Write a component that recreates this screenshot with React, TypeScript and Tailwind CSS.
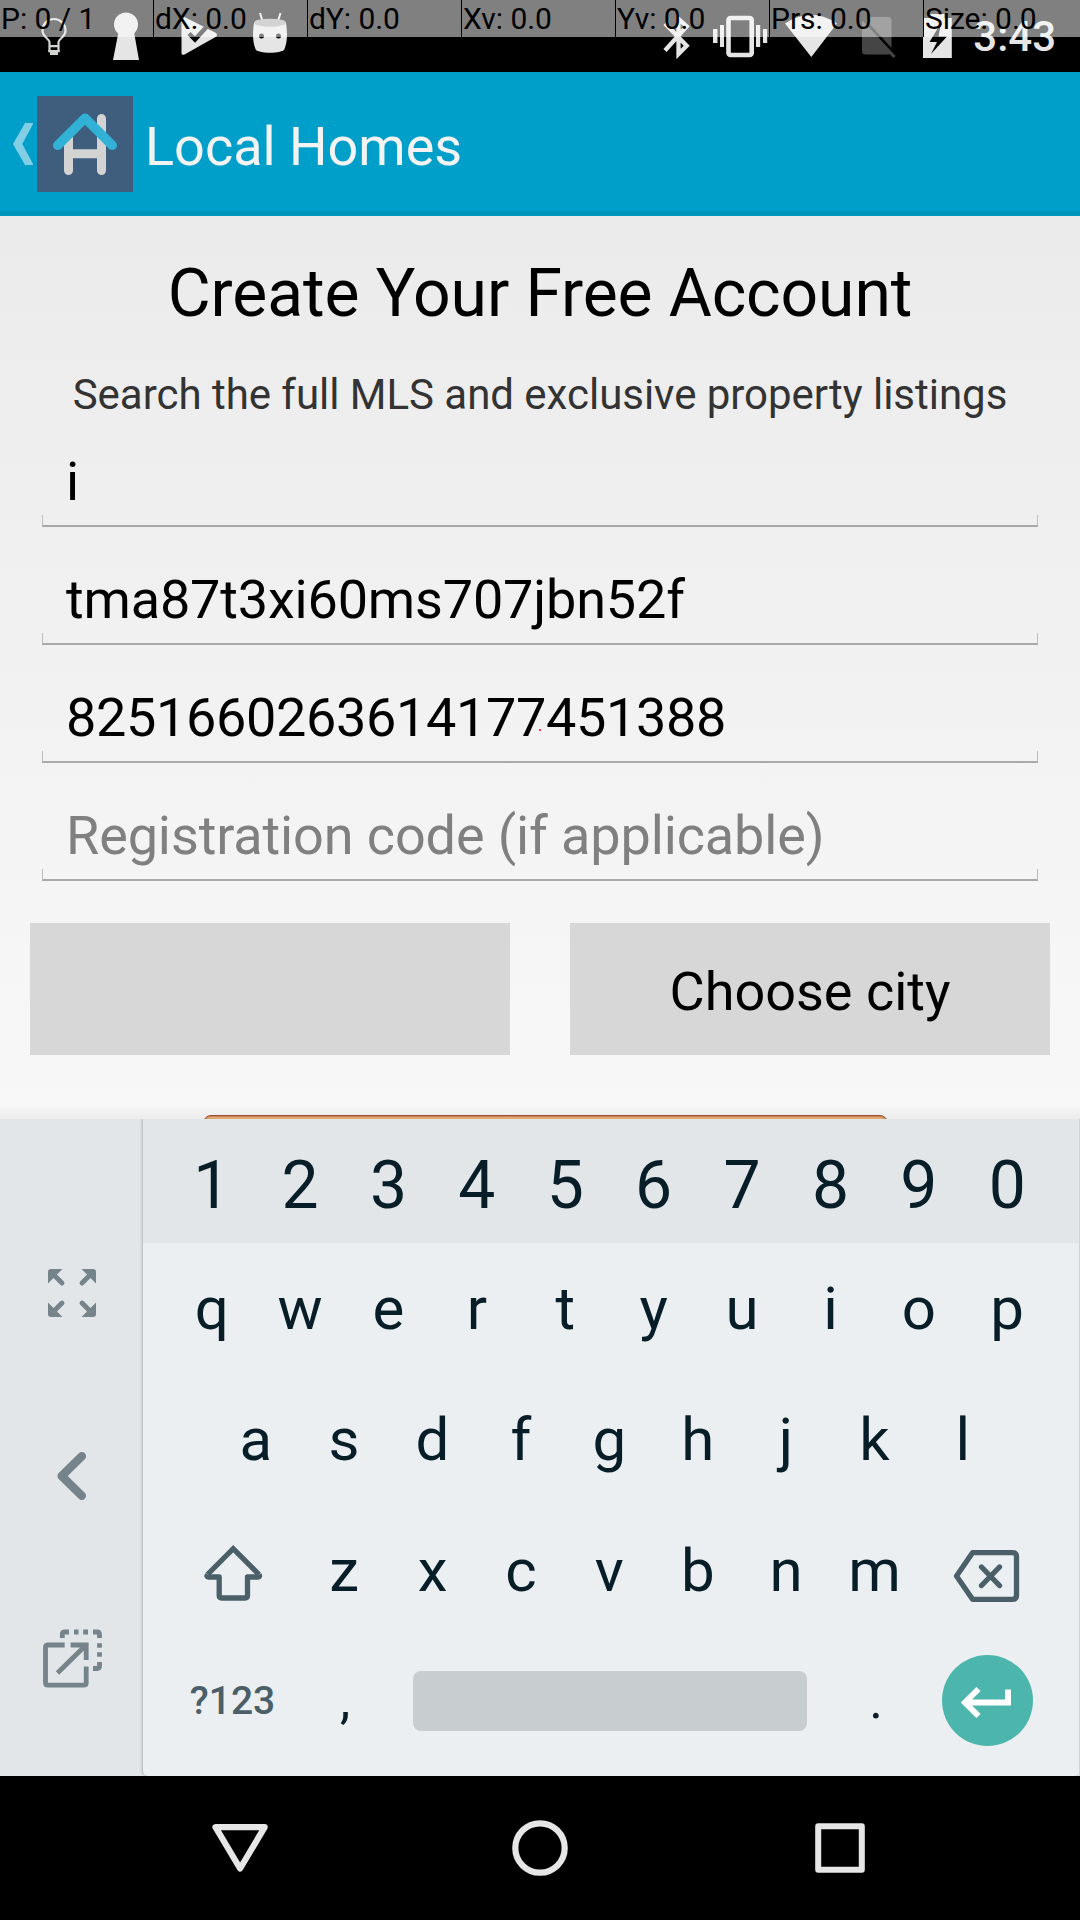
import React from "react";

const pointerStats = ["P: 0 / 1", "dX: 0.0", "dY: 0.0", "Xv: 0.0", "Yv: 0.0", "Prs: 0.0", "Size: 0.0"];

function PointerOverlay() {
  return (
    <div className="absolute inset-x-0 top-0 flex h-[37px]">
      {pointerStats.map((label, i) => (
        <div key={label} className={i < 6 ? "w-[154px] border-r border-black" : "grow"}>
          <div className="h-full bg-white/50 pl-px text-[30px] leading-[37px] tracking-[-0.05px] whitespace-nowrap text-black">{label}</div>
        </div>
      ))}
    </div>
  );
}

function StatusBar() {
  return (
    <div className="relative h-[72px] bg-black text-[#e5e5e5]">
      <div className="flex h-full items-center justify-between pr-[24px] pl-10">
        <div className="flex">
          <svg className="mr-11" width="28" height="72" viewBox="40 0 28 72" fill="none" stroke="#d0d5d1" strokeWidth="2.2">
            <path d="M49.5 51V42C49.5 39 42.5 37 42.5 30.5a11.5 11.5 0 0 1 23 0C65.5 37 58.5 39 58.5 42V51" />
            <path d="M49 46.2h10M48.2 51.2h11.6" />
            <path d="M50 52h8v3h-8z" fill="#d0d5d1" stroke="none" />
          </svg>
          <svg className="mr-10" width="28" height="72" viewBox="112 0 28 72" fill="currentColor">
            <circle cx="126" cy="24.5" r="12" />
            <path d="M118.500 32h15.500L139 60H113z" />
          </svg>
          <svg className="mr-[34px]" width="38" height="72" viewBox="180 0 38 72">
            <path d="M181.500 19q0-3.500 3-2l31.500 16q2 1.800 0 3.700L184.500 54.500q-3 1.200-3-1.500z" fill="currentColor" />
            <path d="M189 33.500l6 6 16.500-18" fill="none" stroke="#000" strokeWidth="4.500" />
          </svg>
          <svg width="36" height="72" viewBox="252 0 36 72">
            <path d="M260 13l2.500 8M280.500 13l-2.500 8" stroke="currentColor" strokeWidth="2" />
            <path d="M254 23C252.500 32 252.500 42 255.500 49C257 54 283 54 284.500 49C287.500 42 287.500 32 286 23z" fill="currentColor" />
            <ellipse cx="270" cy="22.700" rx="16" ry="4" fill="#a7a7a7" />
            <circle cx="261.500" cy="36" r="2.500" />
            <circle cx="278.500" cy="36" r="2.500" />
          </svg>
        </div>
        <div className="flex items-center">
          <svg className="mr-[20px]" width="30" height="72" viewBox="663 0 30 72" fill="none" stroke="currentColor" strokeWidth="4.300">
            <path d="M665.300 50.500L687 26.500L678.800 19V54L687 45.700L665.300 23.500" transform="translate(-.3 0)" />
          </svg>
          <svg className="mr-[17px]" width="55" height="72" viewBox="713 0 55 72" fill="currentColor">
            <rect x="728.500" y="18" width="23.200" height="37" rx="2" fill="none" stroke="currentColor" strokeWidth="4.600" />
            <path d="M713 29h4.500v14H713zM720 25h4v22h-4zM756 25h4.200v22H756zM763 29h4.200v14H763z" />
          </svg>
          <svg className="mr-[25px]" width="52" height="72" viewBox="785 0 52 72" fill="currentColor">
            <path d="M811.300 57L785 23.500Q811.300 6 837 23.500z" />
          </svg>
          <svg className="mr-[27px]" width="34" height="72" viewBox="862 0 34 72">
            <path d="M870 17H888q3.500 0 3.500 3.500V51q0 3.500-3.500 3.500H865.500q-3.500 0-3.500-3.500V25z" fill="#454545" />
            <path d="M861 17.500L893 52.500" stroke="#000" strokeWidth="4" />
            <path d="M862 22L894.500 57" stroke="#454545" strokeWidth="3" />
          </svg>
          <svg className="mr-[21px]" width="29" height="72" viewBox="923 0 29 72" fill="currentColor">
            <path d="M930 14h14.500v4h7.300V58H923V18h7z" />
            <path d="M941 23L929.500 42H937L931 54L947 36.500H938.500z" fill="#000" />
          </svg>
          <span className="text-[42px] leading-[75px] font-medium">3:43</span>
        </div>
      </div>
      <PointerOverlay />
    </div>
  );
}

function ActionBar() {
  return (
    <div className="flex h-36 items-start border-b-[5px] border-[#0096bc] bg-[#009fc9] pl-3">
      <svg className="mr-1" width="21" height="139" viewBox="12 72 21 139" fill="#80cfe4">
        <path d="M25 123h8.500L22.300 144L33.500 165H25L13 144z" />
      </svg>
      <svg className="mt-6" width="96" height="96" viewBox="37 96 96 96" fill="none" strokeLinecap="round" strokeLinejoin="round" strokeWidth="9">
        <path d="M37 96h96v96H37z" fill="#3f5d7d" stroke="none" />
        <path d="M68.500 137V170.500M101.500 118.500V170.500M68.500 153.700H101.500" stroke="#d3d3d3" />
        <path d="M57.700 145.300L85 118.200L112.300 145.300" stroke="#30b1d5" strokeWidth="9.500" />
      </svg>
      <div className="ml-3 text-[54px] leading-[150px] whitespace-nowrap text-[#f3f3f3]">Local Homes</div>
    </div>
  );
}

function Field({ text, className }: { text: string; className: string }) {
  return (
    <div className="h-[102px] pt-[26px]">
      <div className={`pl-6 text-[54px] leading-[61px] whitespace-nowrap ${className}`}>{text}</div>
      <div className="mt-[3px] h-3 border-x border-b-2 border-x-[#bdbdbd] border-b-[#a9a9a9]" />
    </div>
  );
}

function Form() {
  return (
    <div className="relative h-[903px] overflow-hidden bg-linear-to-b from-[#ebebeb] to-[#f8f8f8] pt-[37px]">
      <h1 className="text-center text-[66px] leading-[81px] tracking-[-0.1px] whitespace-nowrap text-black">Create Your Free Account</h1>
      <p className="mt-9 text-center text-[42px] leading-[50px] tracking-[-0.03px] whitespace-nowrap text-[#333]">
        Search the full MLS and exclusive property listings
      </p>
      <div className="mt-[5px] flex flex-col gap-4 px-[42px]">
        <Field text="i" className="text-black" />
        <Field text="tma87t3xi60ms707jbn52f" className="tracking-[-0.17px] text-black" />
        <Field text="8251660263614177451388" className="tracking-[-0.35px] text-black" />
        <Field text="Registration code (if applicable)" className="tracking-[-0.12px] text-[#808080]" />
      </div>
      <div className="mt-[42px] grid grid-cols-2 gap-[60px] px-[30px]">
        <div className="h-[132px] bg-[#d7d7d7]" />
        <div className="h-[132px] bg-[#d7d7d7] text-center text-[54px] leading-[137px] text-black">Choose city</div>
      </div>
      <div className="absolute inset-x-0 bottom-0 h-4 bg-linear-to-b from-transparent to-black/5" />
      <div className="relative mt-[60px] ml-[203px] h-24 w-[685px] rounded-lg border border-[#9a4f32] bg-[#dfa874] shadow-[inset_0_1px_0_#c98455]" />
      <div className="absolute top-[513px] left-[539px] h-0.5 w-0.5 bg-[#ff4040]" />
    </div>
  );
}

function Keys({ keys }: { keys: string }) {
  return (
    <>
      {keys.split("").map((k) => (
        <div key={k} className="w-[88.4px] text-center">
          {k}
        </div>
      ))}
    </>
  );
}

function SidePanel() {
  return (
    <div className="flex w-[143px] flex-col items-center bg-[#e2e6e9] pl-px">
      <svg className="mt-[150px]" width="48" height="48" viewBox="0 0 48 48">
        {[0, 90, 180, 270].map((r) => (
          <g key={r} transform={`rotate(${r} 24 24)`}>
            <path d="M0 14.500V3q0-3 3-3H14.500z" fill="#75838a" />
            <path d="M6 6L14 14" stroke="#75838a" strokeWidth="4.800" strokeLinecap="round" />
          </g>
        ))}
      </svg>
      <svg className="mt-[133px]" width="32" height="52" viewBox="56 1450 32 52" fill="none" stroke="#75838a" strokeWidth="8.500" strokeLinecap="round" strokeLinejoin="round">
        <path d="M81.800 1456.200L61.700 1476L81.800 1495.800" />
      </svg>
      <svg className="mt-[126px]" width="60" height="60" viewBox="42 1628 60 60" fill="none" stroke="#75838a" strokeWidth="4.800">
        <path d="M64.700 1645H48q-2.500 0-2.500 2.500V1682.700q0 2.500 2.500 2.500H83.700q2.500 0 2.500-2.500V1666.500" />
        <path d="M70.600 1645H86.200V1660M57.500 1673L86 1645" />
        <path d="M62.300 1638V1634.500q0-2.500 2.500-2.500H69M74 1632h4.500M83.200 1632h4.800M93 1632h4q2.500 0 2.500 2.500V1638M99.500 1643.200V1647.700M99.500 1652.200V1656.700M99.500 1662V1666q0 2.500-2.500 2.500H93" />
      </svg>
    </div>
  );
}

function Keyboard() {
  return (
    <div className="flex h-[657px] bg-[#e2e6e9]">
      <SidePanel />
      <div className="w-[936px] rounded-b-[5px] bg-[#ebeff2] text-[60px] leading-[131px] text-[#071e28] shadow-[-1px_0_3px_rgba(0,0,0,0.22)]">
        <div className="flex h-[124px] bg-[#e2e6e9] pt-2 pl-[24.500px] text-[66px] leading-[117px]">
          <Keys keys="1234567890" />
        </div>
        <div className="flex h-[131px] pl-[24.500px]">
          <Keys keys="qwertyuiop" />
        </div>
        <div className="flex h-[131px] pl-[68.500px]">
          <Keys keys="asdfghjkl" />
        </div>
        <div className="flex h-[131px] items-center pl-[60px] whitespace-nowrap">
          <svg className="mt-[5px] mr-[37px]" width="60" height="60" viewBox="203 1543 60 60" fill="none" stroke="#4b5f68" strokeWidth="5.300" strokeLinejoin="round">
            <path strokeLinejoin="miter" d="M207.500 1574.500L233.200 1548.700L259 1574.500" />
            <path d="M207.500 1574.500q-1.500 2.500 1 2.500H219.200V1595.500q0 2.500 2.500 2.500H245q2.500 0 2.500-2.500V1577H258q2.500 0 1-2.500" />
          </svg>
          <Keys keys="zxcvbnm" />
          <svg className="mt-[9px] ml-[33px]" width="68" height="56" viewBox="952 1547 68 56" fill="none" stroke="#4b5f68" strokeWidth="5.300" strokeLinejoin="round">
            <path d="M956.500 1576L972.500 1552.700H1012.500q4 0 4 4V1595.300q0 4-4 4H972.500z" />
            <path d="M981.500 1567L999.500 1585.500M999.500 1567L981.500 1585.500" strokeLinecap="round" />
          </svg>
        </div>
        <div className="flex h-[130px] items-center pl-[45px]">
          <div className="w-[89px] text-center text-[39px] leading-[133px] font-medium text-[#4b5f68]">?123</div>
          <div className="ml-[24px] w-[88px] text-center text-[52px] leading-[136px]">,</div>
          <div className="ml-[24px] h-[60px] w-[394px] rounded-lg bg-[#c8cdd0]" />
          <div className="ml-[25px] w-[88px] text-center text-[52px] leading-[136px]">.</div>
          <div className="mb-px ml-[22px] flex h-[91px] w-[91px] items-center justify-center rounded-full bg-[#4db6ac]">
            <svg width="91" height="91" viewBox="942 1655.500 91 91" fill="none" stroke="#fff" strokeWidth="6">
              <path d="M1008 1690V1703H965M978.500 1689.500L965 1703L978.500 1716.500" />
            </svg>
          </div>
        </div>
      </div>
      <div className="w-px bg-[#cfd3d6]" />
    </div>
  );
}

function NavigationBar() {
  return (
    <div className="flex h-36 items-center justify-between bg-black pr-[212px] pl-[210px]">
      <svg width="60" height="60" viewBox="210 1818 60 60" fill="none" stroke="#e6e6e6" strokeWidth="6.200" strokeLinejoin="round">
        <path d="M215.500 1827.200H264.700L240.100 1868.500z" />
      </svg>
      <svg width="60" height="60" viewBox="1 0 60 60" fill="none" stroke="#e6e6e6" strokeWidth="6.200">
        <circle cx="30" cy="30" r="24.700" />
      </svg>
      <svg width="56" height="60" viewBox="812 1818 56 60" fill="none" stroke="#e6e6e6" strokeWidth="6" strokeLinejoin="round">
        <path d="M818.200 1826.200H861.800V1869.800H818.200z" />
      </svg>
    </div>
  );
}

export default function App() {
  return (
    <div className="h-[1920px] w-[1080px] overflow-hidden font-['Roboto',sans-serif]">
      <StatusBar />
      <ActionBar />
      <Form />
      <Keyboard />
      <NavigationBar />
    </div>
  );
}
